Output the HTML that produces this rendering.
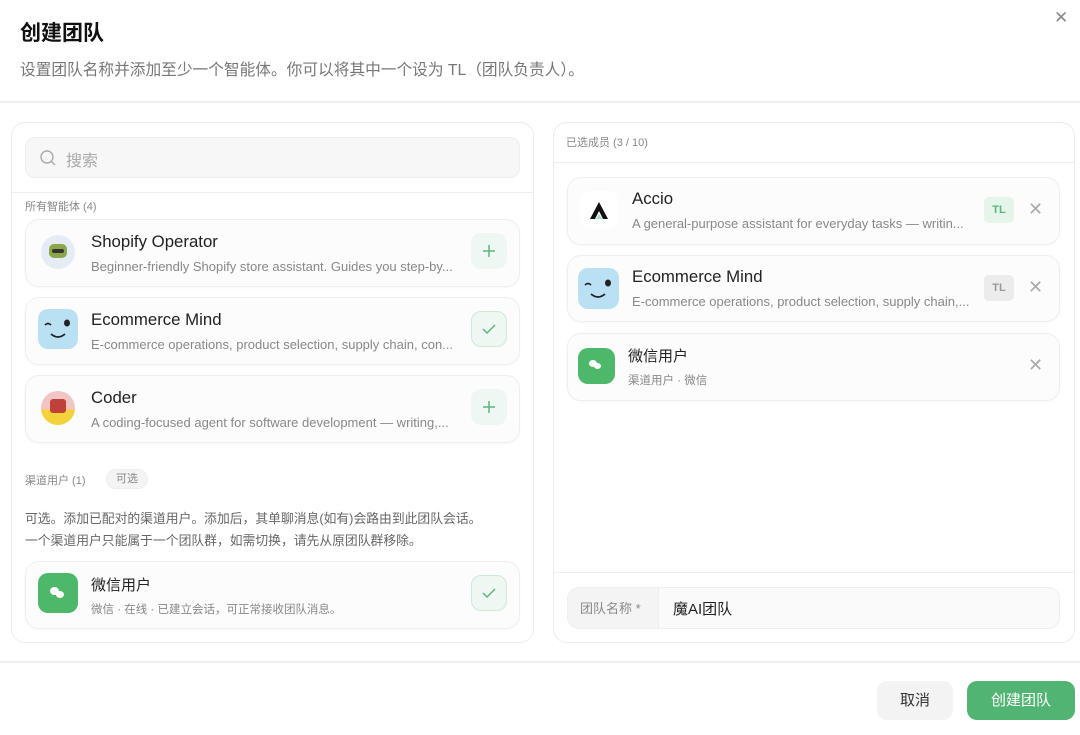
<!DOCTYPE html>
<html><head><meta charset="utf-8"><style>
*{box-sizing:border-box;margin:0;padding:0}
body{width:1080px;height:735px;background:#fff;font-family:"Liberation Sans","Noto Sans CJK SC",sans-serif;position:relative;overflow:hidden;color:#222}
.a{position:absolute}
.panel{position:absolute;border:1px solid #ececec;border-radius:14px;background:#fff}
.card{position:absolute;border:1px solid #eee;border-radius:14px;background:#fcfcfc;box-shadow:0 1px 2px rgba(0,0,0,.03)}
.name{position:absolute;font-size:16.8px;color:#222;white-space:nowrap}
.desc{position:absolute;font-size:13px;color:#888;white-space:nowrap}
.btn{position:absolute;width:36px;height:36px;border-radius:10px;background:#eef7f1}
.x{position:absolute;color:#aaa;font-size:18px}
.tl{position:absolute;width:30px;height:26px;border-radius:5px;font-size:11px;font-weight:bold;text-align:center;line-height:26px}
.lbl{position:absolute;font-size:11px;color:#888}
</style></head><body>
<div class="a" style="left:20px;top:17px;font-size:21px;font-weight:bold;color:#111">创建团队</div>
<div class="a" style="left:20px;top:57px;font-size:15.7px;color:#777">设置团队名称并添加至少一个智能体。你可以将其中一个设为 TL（团队负责人）。</div>
<div class="a" style="left:1054px;top:8px;font-size:17px;color:#888">✕</div>
<div class="a" style="left:0;top:101px;width:1080px;height:2px;background:#f0f0f0"></div>

<div class="panel" style="left:11px;top:122px;width:523px;height:521px"></div>
<div class="a" style="left:25px;top:137px;width:495px;height:41px;background:#f7f7f7;border:1px solid #eee;border-radius:10px"></div>
<svg class="a" style="left:39px;top:149px" width="18" height="18" viewBox="0 0 18 18"><circle cx="8" cy="8" r="6" fill="none" stroke="#aaa" stroke-width="1.4"/><path d="M12.5 12.5L16 16" stroke="#aaa" stroke-width="1.4"/></svg>
<div class="a" style="left:66px;top:147px;font-size:16px;color:#aaa">搜索</div>
<div class="a" style="left:12px;top:192px;width:521px;height:1px;background:#eee"></div>
<div class="lbl" style="left:25px;top:198px">所有智能体 (4)</div>

<div class="card" style="left:25px;top:219px;width:495px;height:68px"></div>
<div class="a" style="left:41px;top:235px;width:34px;height:34px;border-radius:50%;background:#e6ecf6"></div>
<div class="a" style="left:49px;top:244px;width:18px;height:14px;border-radius:5px;background:#8aa84a"></div>
<div class="a" style="left:52px;top:249px;width:12px;height:4px;border-radius:2px;background:#333"></div>
<div class="name" style="left:91px;top:232px">Shopify Operator</div>
<div class="desc" style="left:91px;top:259px">Beginner-friendly Shopify store assistant. Guides you step-by...</div>
<div class="btn" style="left:471px;top:233px"><svg width="36" height="36"><path d="M18 12v12M12 18h12" stroke="#5bb57c" stroke-width="1.5"/></svg></div>

<div class="card" style="left:25px;top:297px;width:495px;height:68px"></div>
<div class="a" style="left:38px;top:309px;width:40px;height:40px;border-radius:10px;background:#b9e0f3"></div>
<svg class="a" style="left:38px;top:309px" width="40" height="40"><path d="M7 16q3-3 6 0" stroke="#222" stroke-width="1.6" fill="none"/><ellipse cx="29" cy="14" rx="3" ry="3.5" fill="#222"/><path d="M13 25q7 6 14 0" stroke="#222" stroke-width="1.8" fill="none"/></svg>
<div class="name" style="left:91px;top:310px">Ecommerce Mind</div>
<div class="desc" style="left:91px;top:337px">E-commerce operations, product selection, supply chain, con...</div>
<div class="btn" style="left:471px;top:311px;border:1px solid #cfe9d8"><svg width="34" height="34"><path d="M11 17l4 4 8-8" stroke="#5bb57c" stroke-width="1.5" fill="none"/></svg></div>

<div class="card" style="left:25px;top:375px;width:495px;height:68px"></div>
<div class="a" style="left:41px;top:391px;width:34px;height:34px;border-radius:50%;background:linear-gradient(#f3c4c4 55%,#f4d23c 55%)"></div>
<div class="a" style="left:50px;top:399px;width:16px;height:14px;border-radius:3px;background:#c0413a"></div>
<div class="name" style="left:91px;top:388px">Coder</div>
<div class="desc" style="left:91px;top:415px">A coding-focused agent for software development — writing,...</div>
<div class="btn" style="left:471px;top:389px"><svg width="36" height="36"><path d="M18 12v12M12 18h12" stroke="#5bb57c" stroke-width="1.5"/></svg></div>

<div class="lbl" style="left:25px;top:472px">渠道用户 (1)</div>
<div class="a" style="left:106px;top:469px;width:42px;height:20px;border-radius:10px;background:#f4f4f4;border:1px solid #eee;font-size:11px;color:#888;text-align:center;line-height:18px">可选</div>
<div class="a" style="left:25px;top:508px;font-size:12.8px;color:#666;line-height:22px">可选。添加已配对的渠道用户。添加后，其单聊消息(如有)会路由到此团队会话。<br>一个渠道用户只能属于一个团队群，如需切换，请先从原团队群移除。</div>

<div class="card" style="left:25px;top:561px;width:495px;height:68px"></div>
<div class="a" style="left:38px;top:573px;width:40px;height:40px;border-radius:10px;background:#4db86a"></div>
<div class="a" style="left:50px;top:587px;width:9px;height:8px;border-radius:50%;background:#fff"></div>
<div class="a" style="left:56px;top:591px;width:8px;height:7px;border-radius:50%;background:#fff"></div>
<div class="name" style="left:91px;top:574px;font-size:15px">微信用户</div>
<div class="desc" style="left:91px;top:601px;font-size:11.5px">微信 · 在线 · 已建立会话，可正常接收团队消息。</div>
<div class="btn" style="left:471px;top:575px;border:1px solid #cfe9d8"><svg width="34" height="34"><path d="M11 17l4 4 8-8" stroke="#5bb57c" stroke-width="1.5" fill="none"/></svg></div>

<div class="panel" style="left:553px;top:122px;width:522px;height:521px"></div>
<div class="lbl" style="left:566px;top:134px">已选成员 (3 / 10)</div>
<div class="a" style="left:554px;top:162px;width:520px;height:1px;background:#eee"></div>

<div class="card" style="left:567px;top:177px;width:493px;height:68px"></div>
<div class="a" style="left:580px;top:191px;width:38px;height:38px;border-radius:10px;background:#fff"></div>
<svg class="a" style="left:588px;top:200px" width="22" height="20"><path d="M2 19L11 2L20 19H15L11 11L7 19Z" fill="#111"/><path d="M8 19L11 14L14 19Z" fill="#9ee3c3"/></svg>
<div class="name" style="left:632px;top:189px">Accio</div>
<div class="desc" style="left:632px;top:216px">A general-purpose assistant for everyday tasks — writin...</div>
<div class="tl" style="left:984px;top:197px;background:#e6f5ea;color:#5bb57c">TL</div>
<div class="x" style="left:1028px;top:199px">✕</div>

<div class="card" style="left:567px;top:255px;width:493px;height:67px"></div>
<div class="a" style="left:578px;top:268px;width:41px;height:41px;border-radius:10px;background:#b9e0f3"></div>
<svg class="a" style="left:578px;top:268px" width="41" height="41"><path d="M7 17q3-3 6 0" stroke="#222" stroke-width="1.6" fill="none"/><ellipse cx="30" cy="15" rx="3" ry="3.5" fill="#222"/><path d="M13 26q7 6 14 0" stroke="#222" stroke-width="1.8" fill="none"/></svg>
<div class="name" style="left:632px;top:267px">Ecommerce Mind</div>
<div class="desc" style="left:632px;top:294px">E-commerce operations, product selection, supply chain,...</div>
<div class="tl" style="left:984px;top:275px;background:#ececec;color:#999">TL</div>
<div class="x" style="left:1028px;top:277px">✕</div>

<div class="card" style="left:567px;top:333px;width:493px;height:68px"></div>
<div class="a" style="left:578px;top:348px;width:37px;height:36px;border-radius:10px;background:#4db86a"></div>
<div class="a" style="left:589px;top:360px;width:8px;height:7px;border-radius:50%;background:#fff"></div>
<div class="a" style="left:594px;top:363px;width:7px;height:6px;border-radius:50%;background:#fff"></div>
<div class="name" style="left:628px;top:345px;font-size:15px">微信用户</div>
<div class="desc" style="left:628px;top:372px;font-size:11.5px">渠道用户 · 微信</div>
<div class="x" style="left:1028px;top:355px">✕</div>

<div class="a" style="left:554px;top:572px;width:520px;height:1px;background:#eee"></div>
<div class="a" style="left:567px;top:587px;width:493px;height:42px;border:1px solid #eee;border-radius:12px;background:#fafafa;overflow:hidden">
<div style="position:absolute;left:0;top:0;width:91px;height:42px;background:#f4f4f4;border-right:1px solid #eee"></div>
</div>
<div class="a" style="left:580px;top:598px;font-size:13px;color:#888">团队名称 *</div>
<div class="a" style="left:673px;top:598px;font-size:15px;color:#222">魔AI团队</div>

<div class="a" style="left:0;top:661px;width:1080px;height:2px;background:#f0f0f0"></div>
<div class="a" style="left:877px;top:681px;width:76px;height:39px;border-radius:10px;background:#f3f3f3;font-size:15px;color:#333;text-align:center;line-height:39px">取消</div>
<div class="a" style="left:967px;top:681px;width:108px;height:39px;border-radius:10px;background:#52b472;font-size:15px;color:#fff;text-align:center;line-height:39px">创建团队</div>
</body></html>
